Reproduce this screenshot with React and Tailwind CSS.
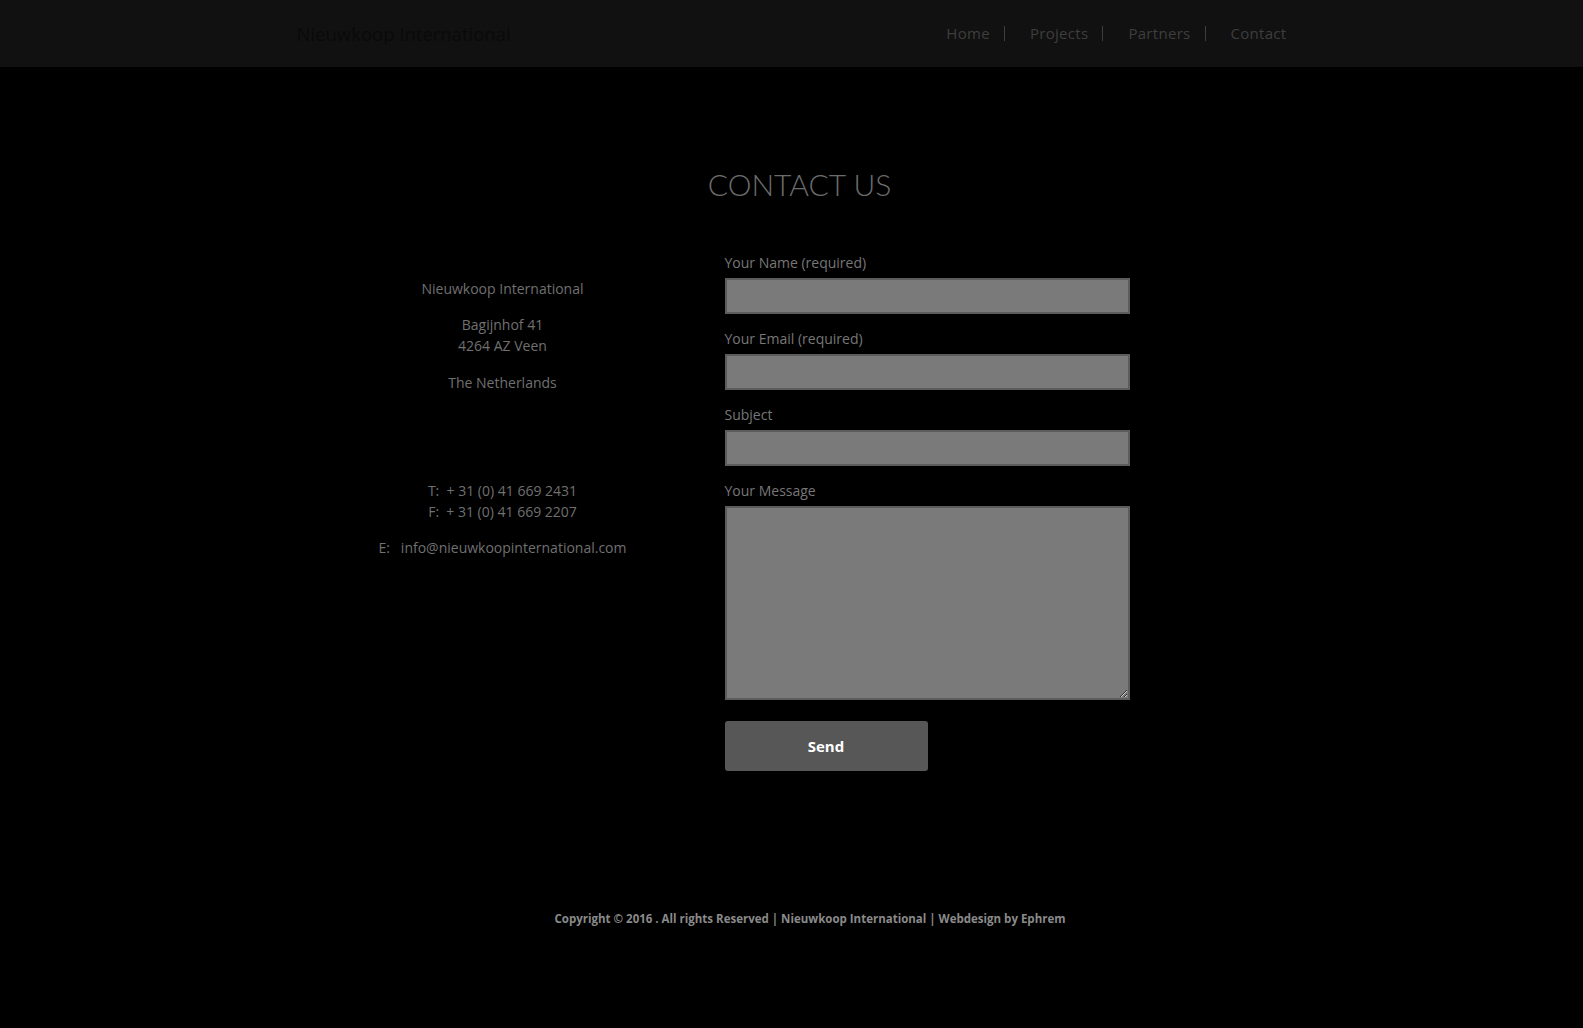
import React from 'react';

const font = { fontFamily: '"Open Sans", Lato, sans-serif' };

const navItems = ['Home', 'Projects', 'Partners', 'Contact'];

const Field = ({ label, tall }) => (
  <div className="flex flex-col">
    <label className="text-[14px] leading-[20px] text-[#777777] mb-[5px]">{label}</label>
    {tall ? (
      <textarea className="h-[194px] w-full bg-[#7a7a7a] border-2 border-[#5c5c5c] outline-none" />
    ) : (
      <input className="h-[36px] w-full bg-[#7a7a7a] border-2 border-[#5c5c5c] outline-none" />
    )}
  </div>
);

export default function App() {
  return (
    <div className="min-h-screen bg-black" style={font}>
      <header className="h-[67px] bg-[#111111]">
        <div className="w-[990px] mx-auto h-full flex items-center justify-between">
          <span className="text-[18.5px] text-[#0a0a0a]">Nieuwkoop International</span>
          <nav className="flex items-center">
            {navItems.map((item, i) => (
              <div key={item} className="flex items-center">
                <span className="text-[15px] text-[#3e3e3e] tracking-[0.3px]">{item}</span>
                {i < navItems.length - 1 && (
                  <span className="ml-[14px] mr-[25px] h-[15px] w-px bg-[#3e3e3e]" />
                )}
              </div>
            ))}
          </nav>
        </div>
      </header>

      <main className="pt-[99px]">
        <h1 className="pl-[16px] text-center text-[30px] leading-[36px] font-light text-[#6c6c6c]" style={{ fontFamily: 'Lato, sans-serif' }}>CONTACT US</h1>

        <div className="w-[990px] mx-auto flex mt-[51px]">
          <div className="ml-[56px] w-[300px] pt-[25px] text-center text-[14px] leading-[21px] text-[#707070]">
            <p className="mb-[15px]">Nieuwkoop International</p>
            <p className="mb-[16px]">Bagijnhof 41<br />4264 AZ Veen</p>
            <p className="mb-[87px]">The Netherlands</p>
            <p className="mb-[15px]">T:&nbsp; + 31 (0) 41 669 2431<br />F:&nbsp; + 31 (0) 41 669 2207</p>
            <p>E:&nbsp;&nbsp; info@nieuwkoopinternational.com</p>
          </div>

          <form className="ml-[72px] w-[405px] flex flex-col gap-[15px]">
            <Field label="Your Name (required)" />
            <Field label="Your Email (required)" />
            <Field label="Subject" />
            <Field label="Your Message" tall />
            <button type="button" className="mt-[6px] w-[203px] h-[50px] rounded-[3px] bg-[#575757] text-white text-[15px] font-bold">
              Send
            </button>
          </form>
        </div>
      </main>

      <footer className="pt-[139px] pb-[100px] pl-[37px] text-center text-[11.5px] font-bold text-[#8a8a8a]">
        Copyright © 2016 . All rights Reserved | Nieuwkoop International | Webdesign by Ephrem
      </footer>
    </div>
  );
}
